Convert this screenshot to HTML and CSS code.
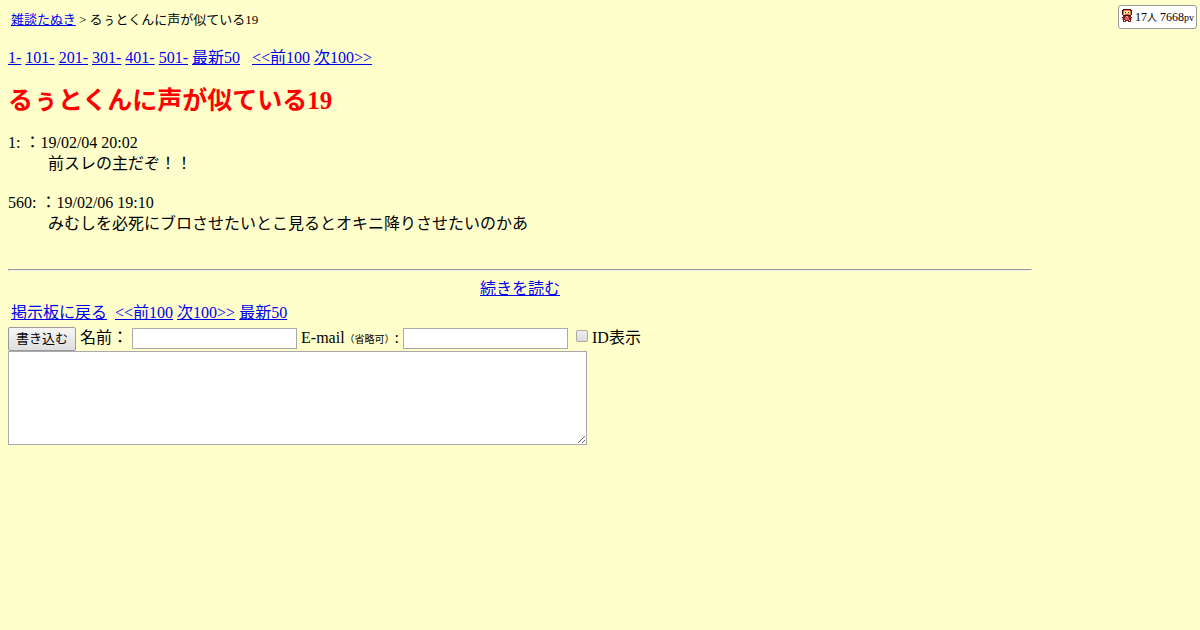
FILE: index.html
```
<!DOCTYPE html>
<html lang="ja">
<head>
  <meta charset="UTF-8">
  <meta name="viewport" content="width=device-width, initial-scale=1.0">
  <title>るぅとくんに声が似ている19</title>
  <link rel="stylesheet" href="styles.css">
</head>
<body>
  <div class="counter">
    <svg class="counter-icon" width="10" height="13" viewBox="0 0 10 13" shape-rendering="crispEdges" aria-hidden="true">
      <path fill="#501008" d="M1 0h8v1h1v5h-1v1h-8v-1h-1v-5h1z"/>
      <path fill="#f08030" d="M2 1h6v1h1v4h-8v-4h1z"/>
      <path fill="#ffe0a8" d="M2 2h6v4h-6z"/>
      <path fill="#401008" d="M3 3h1v1h-1zM6 3h1v1h-1z"/>
      <path fill="#e04020" d="M3 5h4v1h-4z"/>
      <path fill="#802020" d="M1 7h8v1h1v3h-1v2h-3v-1h-2v1h-3v-2h-1v-3h1z"/>
      <path fill="#f0a090" d="M0 9h1v2h-1zM9 9h1v2h-1zM4 7h2v1h-2z"/>
      <path fill="#e06058" d="M3 8h4v3h-4z"/>
      <path fill="#fff" d="M2 11h1v1h-1zM7 11h1v1h-1z"/>
    </svg>
    17<small>人</small> 7668<small>pv</small>
  </div>

  <div class="breadcrumb"><a href="#">雑談たぬき</a> &gt; るぅとくんに声が似ている19</div>

  <div class="pager">
    <a href="#">1-</a>
    <a href="#">101-</a>
    <a href="#">201-</a>
    <a href="#">301-</a>
    <a href="#">401-</a>
    <a href="#">501-</a>
    <a href="#">最新50</a> &nbsp;
    <a href="#">&lt;&lt;前100</a>
    <a href="#">次100&gt;&gt;</a>
  </div>

  <h1 class="title">るぅとくんに声が似ている19</h1>

  <dl class="thread">
    <dt>1: ：19/02/04 20:02</dt>
    <dd>前スレの主だぞ！！</dd>
    <dt>560: ：19/02/06 19:10</dt>
    <dd>みむしを必死にブロさせたいとこ見るとオキニ降りさせたいのかあ</dd>
  </dl>

  <hr class="line">

  <div class="more"><a href="#">続きを読む</a></div>
  <div class="back">
    <a href="#">掲示板に戻る</a>&nbsp;
    <a href="#">&lt;&lt;前100</a>
    <a href="#">次100&gt;&gt;</a>
    <a href="#">最新50</a>
  </div>

  <form class="post">
    <div class="post-row">
      <button class="submit" type="button">書き込む</button>
      <label for="name">名前：</label>
      <input class="text" id="name" type="text">
      <label for="mail">E-mail<span class="note">（省略可）</span>:</label>
      <input class="text" id="mail" type="text">
      <span class="id-show"><input class="check" id="show-id" type="checkbox"><label for="show-id">ID表示</label></span>
    </div>
    <textarea class="message" aria-label="本文"></textarea>
  </form>
</body>
</html>
```

FILE: styles.css
```
body {
  max-width: 1024px;
  margin: 8px;
  background-color: #ffffcc;
  color: #000;
  font-family: "Liberation Serif", "Noto Sans CJK JP", serif;
  font-size: 16px;
  line-height: 21px;
}

a {
  color: #0000ee;
}

.counter {
  position: absolute;
  top: 5px;
  right: 3px;
  padding: 0 2px 0 3px;
  border: 1px solid #999;
  border-radius: 3px;
  background-color: #fff;
  font-size: 12px;
  line-height: 22px;
}

.counter small {
  font-size: 10px;
  line-height: 12px;
}

.counter-icon {
  vertical-align: -1px;
}

.breadcrumb {
  padding: 1px 3px;
  font-size: 13px;
}

.pager {
  margin-top: 16px;
}

.title {
  margin: 17px 0 15px;
  color: #ff0000;
  font-size: 25px;
  line-height: 32px;
}

.thread {
  margin: 0;
}

.thread dd {
  margin: 0 0 18px 40px;
}

.line {
  margin: 35px 0 7px;
}

.more {
  text-align: center;
}

.back {
  padding: 3px 3px 4px;
}

.post-row {
  display: flex;
  align-items: flex-start;
  gap: 4px;
  height: 24px;
}

.submit {
  height: 24px;
  padding: 0 7px 3px;
  border: 1px solid #999;
  border-radius: 2px;
  background: linear-gradient(#f6f6f6, #dedede);
  color: #000;
  font-family: inherit;
  font-size: 13px;
}

.text {
  box-sizing: border-box;
  width: 165px;
  height: 21px;
  margin: 1px 0 0;
  padding: 1px;
  border: 1px solid #a9a9a9;
  background-color: #fff;
}

.note {
  font-size: 10px;
}

.id-show {
  display: flex;
  align-items: flex-start;
  gap: 4px;
  margin-left: 4px;
}

.check {
  appearance: none;
  width: 12px;
  height: 12px;
  margin: 3px 0 0;
  border: 1px solid #aaa;
  border-radius: 2px;
  background: linear-gradient(#eee, #ddd);
}

.check:checked {
  background: #555;
}

.message {
  display: block;
  box-sizing: border-box;
  width: 579px;
  max-width: 100%;
  height: 94px;
  margin: 0;
  padding: 2px;
  border: 1px solid #a9a9a9;
  background-color: #fff;
}
```
